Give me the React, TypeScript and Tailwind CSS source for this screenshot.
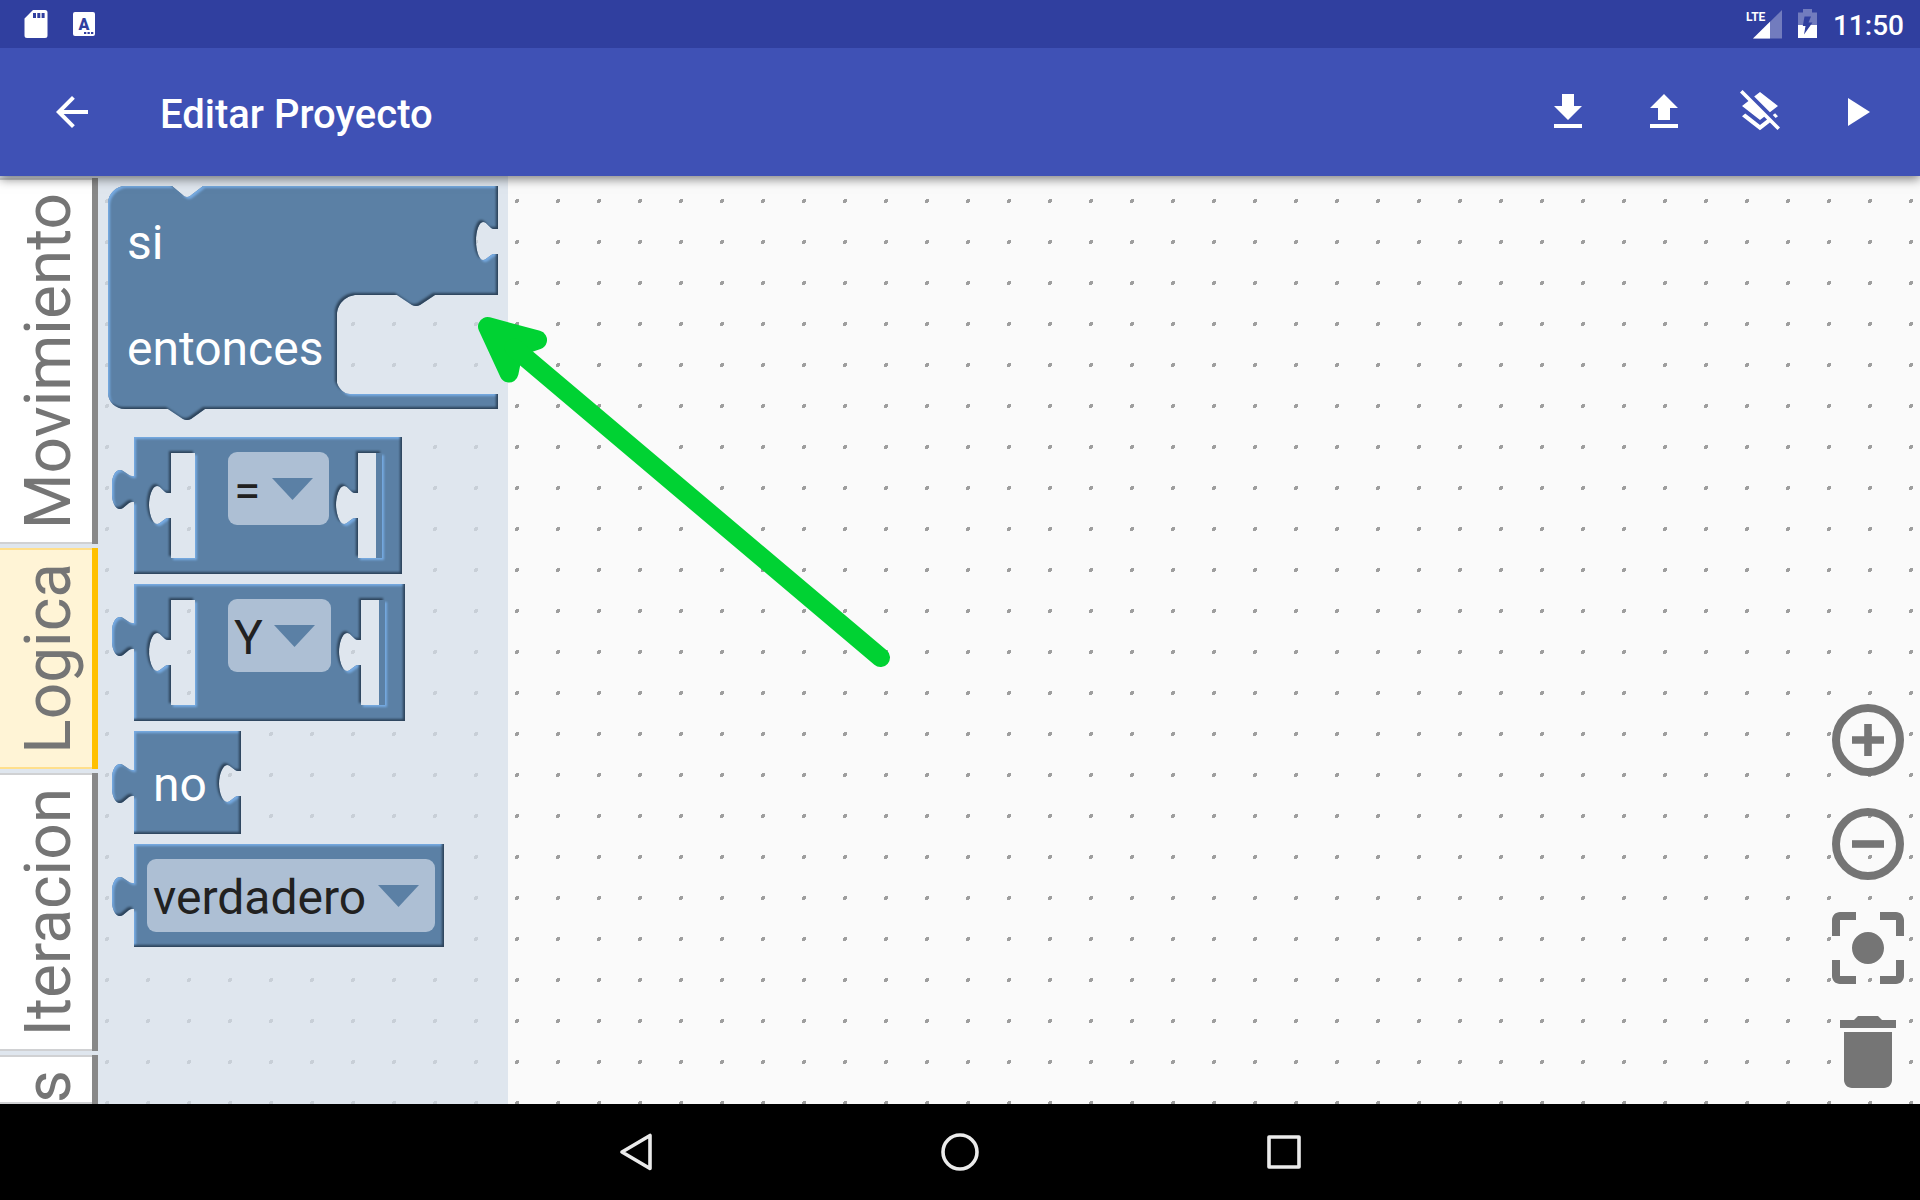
import React from "react";

const FACE = "#5b80a5";

function Dots() {
  return (
    <svg className="absolute inset-0 h-full w-full" aria-hidden="true">
      <defs>
        <pattern id="grid" width="41" height="41" patternUnits="userSpaceOnUse">
          <path d="M24 23h3v3h-1v1h-3v-3h1z" fill="#9e9e9e" />
        </pattern>
      </defs>
      <rect width="100%" height="100%" fill="url(#grid)" />
    </svg>
  );
}

function BevelFilter() {
  return (
    <svg className="absolute h-0 w-0" aria-hidden="true">
      <defs>
        <filter id="bevel" x="-5%" y="-5%" width="110%" height="110%" colorInterpolationFilters="sRGB">
          <feGaussianBlur in="SourceAlpha" stdDeviation="1" result="soft" />
          <feOffset in="soft" dx="2" dy="2" result="down" />
          <feComposite in="SourceAlpha" in2="down" operator="out" result="litEdge" />
          <feFlood floodColor="#76aae2" />
          <feComposite in2="litEdge" operator="in" result="lit" />
          <feOffset in="soft" dx="-2" dy="-2" result="up" />
          <feComposite in="SourceAlpha" in2="up" operator="out" result="darkEdge" />
          <feFlood floodColor="#2d435a" />
          <feComposite in2="darkEdge" operator="in" result="dark" />
          <feMerge>
            <feMergeNode in="SourceGraphic" />
            <feMergeNode in="lit" />
            <feMergeNode in="dark" />
          </feMerge>
        </filter>
      </defs>
    </svg>
  );
}

function Shape({ d, strip }: { d: string; strip?: number }) {
  return (
    <svg className="absolute inset-0 h-full w-full overflow-visible" aria-hidden="true">
      <path d={d} fill={FACE} fillRule="evenodd" filter="url(#bevel)" />
      {strip !== undefined && <rect x={strip} y="16" width="6" height="105" fill={FACE} />}
    </svg>
  );
}

const KNOB = "V65H20C16 65 12 72 8 72C3 72 0 64 0 58V47C0 40 3 33 8 33C12 33 16 39 20 39H22Z";

function valueShape(right: number, second: number) {
  const hole = (x: number, w: number) =>
    `M${x} 16H${x + w}V121H${x}V81H${x - 3}C${x - 7} 81 ${x - 10} 87 ${x - 14} 87C${x - 19} 87 ${x - 22} 75 ${x - 22} 68C${x - 22} 60 ${x - 19} 49 ${x - 14} 49C${x - 10} 49 ${x - 7} 56 ${x - 3} 56H${x}Z`;
  return `M22 0H${right}V137H22${KNOB}${hole(59, 24)}${hole(second, 24)}`;
}

const SOCKET_NO = "V40H126C122 40 119 34 115 34C111 34 107 43 107 53C107 62 111 71 115 71C119 71 122 65 126 65H129";

const IF_SHAPE =
  "M0 17C0 8 8 0 17 0H64L76 10Q79 12 82 10L95 0H390V43H386C382 43 379 36 375 36C371 36 368 45 368 55C368 64 371 74 375 74C379 74 382 68 386 68H390V109H327L312 119Q308 121 304 119L289 109H249C238 109 229 118 229 129V197C231 203 236 208 242 208H390V223H97L83 233Q79 235 75 233L60 223H17C8 223 0 216 0 207Z";

function Field({ label, options }: { label: string; options: string[] }) {
  return (
    <span className="relative inline-flex h-[73px] items-center rounded-[9px] bg-[#adbfd4]">
      <select
        aria-label={label}
        className="h-full appearance-none border-0 bg-transparent pt-1 pr-[68px] pl-[6px] text-5xl leading-none text-[#212121] outline-none"
      >
        {options.map((o) => (
          <option key={o}>{o}</option>
        ))}
      </select>
      <svg
        className="pointer-events-none absolute top-[26px] right-4 h-[22px] w-[41px]"
        viewBox="0 0 41 22"
        aria-hidden="true"
      >
        <path d="M0 0H41L20.5 22Z" fill={FACE} />
      </svg>
    </span>
  );
}

function Flyout() {
  return (
    <section
      aria-label="Bloques de Logica"
      className="relative flex w-[410px] shrink-0 flex-col items-start gap-[10px] bg-[#d6dfea]/75 pt-[10px] pl-[10px] text-5xl leading-none"
    >
      <div className="relative flex h-[241px] w-[390px] flex-col gap-[58px] pt-[33px] pl-[19px] text-white">
        <Shape d={IF_SHAPE} />
        <span className="relative">si</span>
        <span className="relative">entonces</span>
      </div>
      <div className="relative ml-1 h-[137px] w-[290px] pt-[15px] pl-[116px]">
        <Shape d={valueShape(290, 246)} strip={264} />
        <Field label="Comparador" options={["="]} />
      </div>
      <div className="relative ml-1 h-[137px] w-[293px] pt-[15px] pl-[116px]">
        <Shape d={valueShape(293, 249)} strip={267} />
        <Field label="Operador" options={["Y"]} />
      </div>
      <div className="relative ml-1 flex h-[103px] w-[129px] items-center pt-1 pl-[41px] text-white">
        <Shape d={`M22 0H129${SOCKET_NO}V103H22${KNOB}`} />
        <span className="relative">no</span>
      </div>
      <div className="relative ml-1 h-[103px] w-[332px] pt-[15px] pl-[35px]">
        <Shape d={`M22 0H332V103H22${KNOB}`} />
        <Field label="Valor" options={["verdadero"]} />
      </div>
    </section>
  );
}

function Tab({ label, active, last }: { label: string; active?: boolean; last?: boolean }) {
  const tone = active
    ? "bg-[#fff4d6] shadow-[inset_-6px_0_0_#ffc000,inset_0_2px_0_#ffdf8c,inset_0_-2px_0_#ffdf8c]"
    : "bg-white shadow-[inset_-6px_0_0_#888888,inset_0_2px_0_#d0d1d3,inset_0_-2px_0_#d0d1d3]";
  return (
    <button
      role="tab"
      aria-selected={!!active}
      className={`flex w-[98px] items-start pl-[3px] text-[64px] leading-[92px] text-[#757575] ${tone} ${last ? "flex-1 pt-[15px]" : "shrink-0 py-[15px]"}`}
    >
      <span className="rotate-180 [writing-mode:vertical-rl]">{label}</span>
    </button>
  );
}

function BarButton({ label, d }: { label: string; d: string }) {
  return (
    <button aria-label={label} className="px-6 py-3">
      <svg className="size-12 fill-white" viewBox="0 0 24 24">
        <path d={d} />
      </svg>
    </button>
  );
}

function ToolButton({ label, children }: { label: string; children: React.ReactNode }) {
  return (
    <button aria-label={label}>
      <svg className="size-[72px]" viewBox="3 3 18 18" fill="#757575">
        {children}
      </svg>
    </button>
  );
}

function StatusBar() {
  return (
    <div className="relative z-20 flex h-12 shrink-0 items-center bg-[#303f9f] px-4">
      <svg className="h-12 w-24" viewBox="16 0 96 48" fill="#fff" aria-hidden="true">
        <path
          fillRule="evenodd"
          d="M33 10H45Q47.500 10 47.500 12.500V35.500Q47.500 38 45 38H27Q24.500 38 24.500 35.500V18.500ZM33 13V18H36V13ZM37.300 13V18H40.300V13ZM41.600 13V18H44.600V13Z"
        />
        <rect x="73" y="12" width="22" height="24" rx="2" />
        <text x="84" y="29.500" fill="#303f9f" fontSize="16" fontWeight="900" textAnchor="middle">
          A
        </text>
        <path d="M84 32h2.300v2h-2.300zM87.500 32h2.300v2h-2.300zM91 32h2.300v2h-2.300z" fill="#303f9f" />
      </svg>
      <div className="ml-auto flex items-center">
        <svg className="h-12 w-[37px]" viewBox="0 0 37 48" role="img" aria-label="LTE">
          <path d="M36 10V38.500H7Z" fill="#fff" fillOpacity=".32" />
          <path d="M24 21.800V38.500H7Z" fill="#fff" />
          <text x="0" y="21" fill="#fff" fontSize="12" fontWeight="700">
            LTE
          </text>
        </svg>
        <svg className="ml-[15px] h-12 w-[19px]" viewBox="0 0 19 48" aria-hidden="true">
          <path d="M0 12.500H5V9H14V12.500H19V25H0Z" fill="#fff" fillOpacity=".32" />
          <path d="M0 25H19V38H0Z" fill="#fff" />
          <path d="M6.500 16.500H13L10.500 22.500H14.500L6 34.500L7.500 26H4.800Z" fill="#303f9f" />
        </svg>
        <time className="ml-4 pt-[3px] text-[28px] leading-none font-medium text-white">11:50</time>
      </div>
    </div>
  );
}

export default function App() {
  return (
    <div className="flex h-screen flex-col overflow-hidden bg-[#fafafa] font-['Roboto',sans-serif]">
      <BevelFilter />
      <StatusBar />
      <header className="relative z-10 flex h-32 shrink-0 items-center bg-[#3f51b5] pr-4 pl-6 shadow-[0_3px_10px_rgba(0,0,0,0.5)]">
        <BarButton label="Atrás" d="M20 11H7.830l5.590-5.590L12 4l-8 8 8 8 1.410-1.410L7.830 13H20v-2z" />
        <h1 className="ml-10 pt-[5px] text-[40px] leading-none font-medium text-white">Editar Proyecto</h1>
        <div className="ml-auto flex">
          <BarButton label="Descargar" d="M19 9h-4V3H9v6H5l7 7 7-7zM5 18v2h14v-2H5z" />
          <BarButton label="Subir" d="M9 16h6v-6h4l-7-7-7 7h4zm-4 2h14v2H5z" />
          <BarButton
            label="Limpiar capas"
            d="M19.810 14.990l1.190-.920-1.430-1.430-1.190.920 1.430 1.430zm-.450-4.720L21 9l-9-7-2.910 2.270 7.870 7.880 2.400-1.880zM3.270 1L2 2.270l4.220 4.220L3 9l1.630 1.270L12 16l2.100-1.630 1.430 1.430L12 18.540l-7.370-5.730L3 14.070l9 7 4.950-3.850L20.730 21 22 19.730 3.270 1z"
          />
          <BarButton label="Ejecutar" d="M8 5v14l11-7z" />
        </div>
      </header>

      <main className="relative flex min-h-0 flex-1 overflow-hidden">
        <Dots />
        <div role="tablist" aria-label="Categorias" className="relative flex w-[98px] shrink-0 flex-col gap-1 bg-[#dfe6ee] pt-0.5">
          <Tab label="Movimiento" />
          <Tab label="Logica" active />
          <Tab label="Iteracion" />
          <Tab label="s" last />
        </div>
        <Flyout />
        <div className="relative ml-auto flex flex-col justify-end gap-8 p-4">
          <ToolButton label="Acercar">
            <circle cx="12" cy="12" r="8" fill="none" stroke="#757575" strokeWidth="2" />
            <path d="M11.050 8h1.900v3.050H16v1.900h-3.050V16h-1.900v-3.050H8v-1.900h3.050z" />
          </ToolButton>
          <ToolButton label="Alejar">
            <circle cx="12" cy="12" r="8" fill="none" stroke="#757575" strokeWidth="2" />
            <path d="M8 11.050h8v1.900H8z" />
          </ToolButton>
          <ToolButton label="Centrar">
            <path d="M12 8c-2.210 0-4 1.790-4 4s1.790 4 4 4 4-1.790 4-4-1.790-4-4-4zm-7 7H3v4c0 1.100.900 2 2 2h4v-2H5v-4zM5 5h4V3H5c-1.100 0-2 .900-2 2v4h2V5zm14-2h-4v2h4v4h2V5c0-1.100-.900-2-2-2zm0 16h-4v2h4c1.100 0 2-.900 2-2v-4h-2v4z" />
          </ToolButton>
          <ToolButton label="Eliminar">
            <path d="M6 19c0 1.100.900 2 2 2h8c1.100 0 2-.900 2-2V7H6v12zM19 4h-3.500l-1-1h-5l-1 1H5v2h14V4z" />
          </ToolButton>
        </div>
        <svg
          className="pointer-events-none absolute top-[140px] left-[476px] h-[352px] w-[416px]"
          viewBox="476 316 416 352"
          fill="#00d233"
          stroke="#00d233"
          strokeWidth="19"
          strokeLinejoin="round"
          strokeLinecap="round"
          aria-hidden="true"
        >
          <path d="M487.500 326.500L537.500 340L514 348L509 373Z" />
          <path d="M514 348L880.500 657.500" fill="none" />
        </svg>
      </main>

      <nav className="relative z-10 flex h-24 shrink-0 items-center justify-center bg-black">
        {[
          { label: "Volver", shape: <path d="M44 13.500V46.500L16 30Z" /> },
          { label: "Inicio", shape: <circle cx="30" cy="30" r="17" /> },
          { label: "Recientes", shape: <rect x="15" y="15" width="30" height="30" /> },
        ].map(({ label, shape }) => (
          <button key={label} aria-label={label} className="flex w-[324px] justify-center">
            <svg
              className="size-[60px]"
              viewBox="0 0 60 60"
              fill="none"
              stroke="#ebebeb"
              strokeWidth="3.600"
              strokeLinejoin="round"
            >
              {shape}
            </svg>
          </button>
        ))}
      </nav>
    </div>
  );
}
